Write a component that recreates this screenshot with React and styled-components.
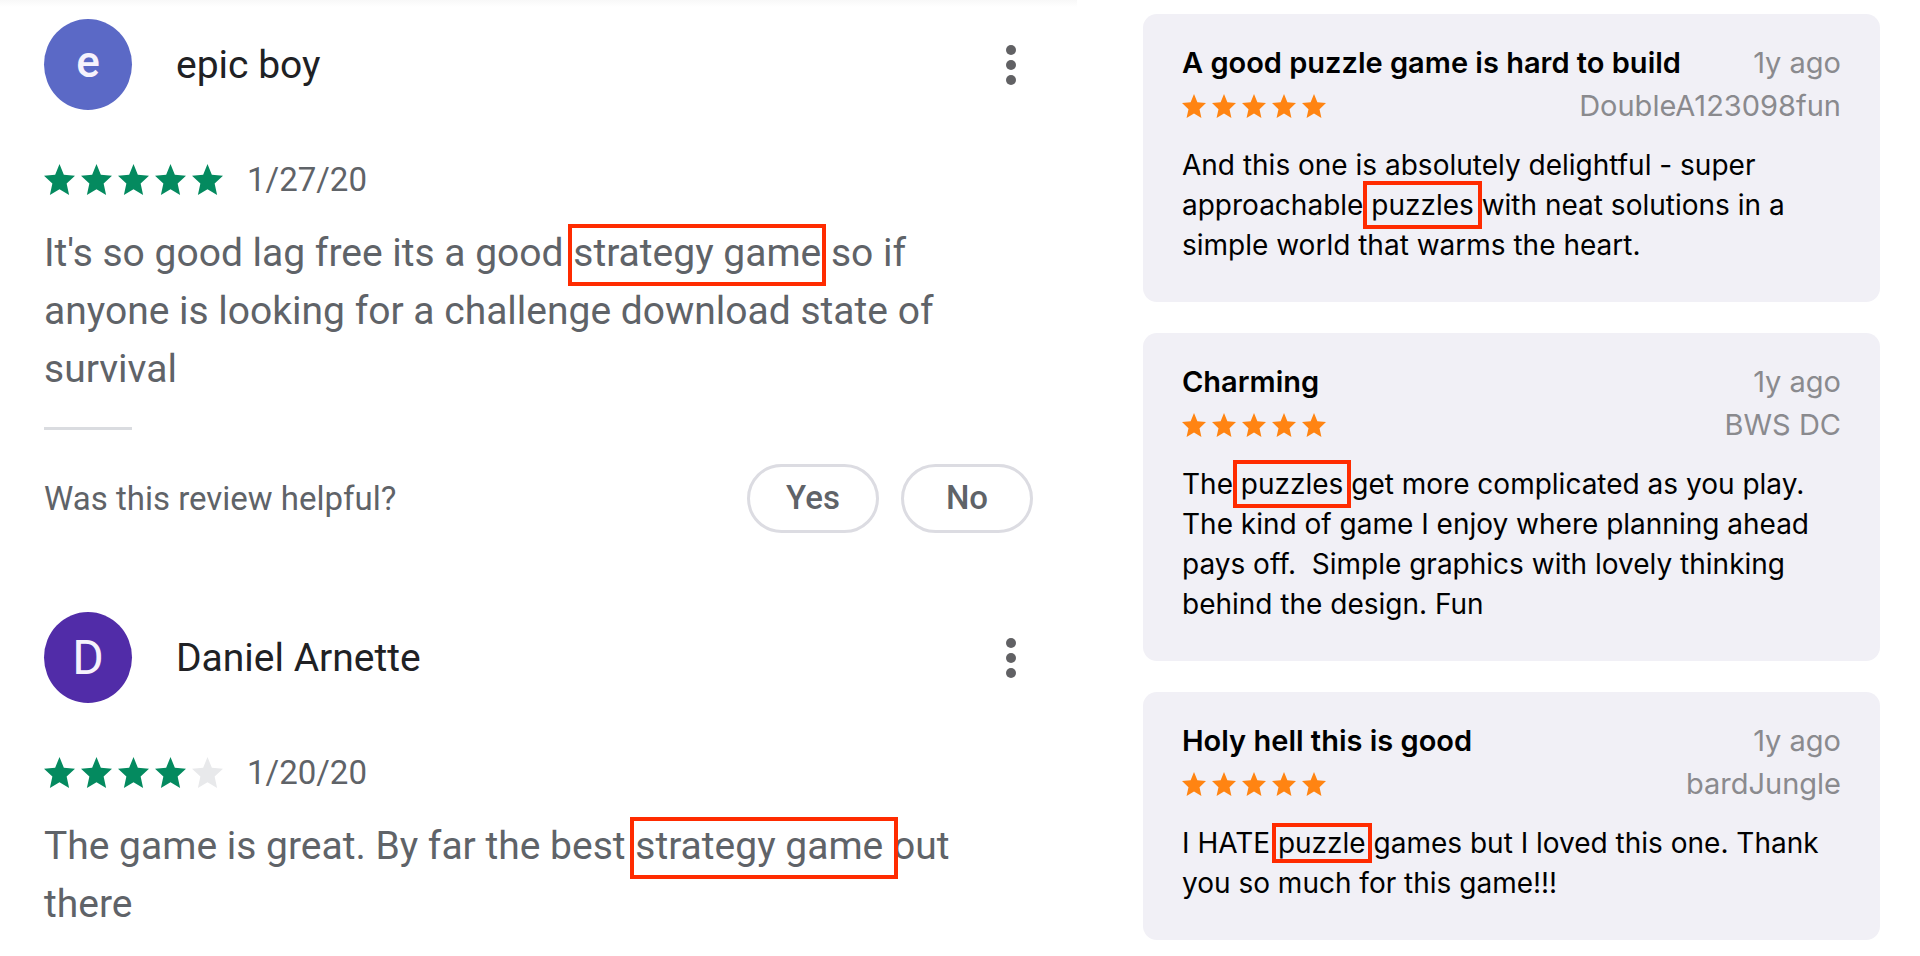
import React from 'react';
import styled, { createGlobalStyle } from 'styled-components';

const GlobalStyle = createGlobalStyle`
  * {
    box-sizing: border-box;
  }

  body {
    margin: 0;
    background: #fff;
  }

  h2, h3, p {
    margin: 0;
  }
`;

// Words in [brackets] are outlined in red.
const playReviews = [
  {
    name: 'epic boy',
    initial: 'e',
    color: '#5b69c6',
    bold: true,
    rating: 5,
    date: '1/27/20',
    lines: [
      "It's so good lag free its a good [strategy game] so if",
      'anyone is looking for a challenge download state of',
      'survival',
    ],
    askHelpful: true,
  },
  {
    name: 'Daniel Arnette',
    initial: 'D',
    color: '#512ca8',
    rating: 4,
    date: '1/20/20',
    lines: [
      'The game is great. By far the best [strategy game ]out',
      'there',
    ],
  },
];

const storeReviews = [
  {
    title: 'A good puzzle game is hard to build',
    author: 'DoubleA123098fun',
    lines: [
      'And this one is absolutely delightful - super',
      'approachable [puzzles] with neat solutions in a',
      'simple world that warms the heart.',
    ],
  },
  {
    title: 'Charming',
    author: 'BWS DC',
    lines: [
      'The [puzzles] get more complicated as you play.',
      'The kind of game I enjoy where planning ahead',
      'pays off.  Simple graphics with lovely thinking',
      'behind the design. Fun',
    ],
  },
  {
    title: 'Holy hell this is good',
    author: 'bardJungle',
    tightMark: true,
    lines: [
      'I HATE [puzzle] games but I loved this one. Thank',
      'you so much for this game!!!',
    ],
  },
];

const STAR = '50,0 64,33 100,36 73,60 81,95 50,77 19,95 27,60 0,36 36,33';

const Stars = ({ rating = 5, size, color }) => (
  <StarRow role="img" aria-label={`${rating} out of 5 stars`}>
    {[1, 2, 3, 4, 5].map((n) => (
      <svg key={n} width={size} height={size} viewBox="0 0 100 95" preserveAspectRatio="none">
        <polygon points={STAR} fill={n <= rating ? color : '#e8e9eb'} />
      </svg>
    ))}
  </StarRow>
);

const Lines = ({ lines, mark: MarkTag, tight }) =>
  lines.map((line) => (
    <Line key={line}>
      {line.split(/(\[.*?\])/).filter(Boolean).map((part) =>
        part.startsWith('[') ? (
          <MarkTag key={part} $tight={tight}>{part.slice(1, -1)}</MarkTag>
        ) : (
          part
        )
      )}
    </Line>
  ));

const PlayReview = ({ review }) => (
  <PlayItem>
    <PlayHeader>
      <Avatar $color={review.color} $bold={review.bold}>{review.initial}</Avatar>
      <PlayName>{review.name}</PlayName>
      <MenuButton aria-label="More options">
        <svg width="12" height="42" viewBox="0 0 12 42" fill="#616164">
          <circle cx="6" cy="6" r="5" />
          <circle cx="6" cy="21" r="5" />
          <circle cx="6" cy="36" r="5" />
        </svg>
      </MenuButton>
    </PlayHeader>
    <PlayMeta>
      <Stars rating={review.rating} size={31} color="#048a5f" />
      <PlayDate>{review.date}</PlayDate>
    </PlayMeta>
    <PlayBody>
      <Lines lines={review.lines} mark={PlayMark} />
    </PlayBody>
    {review.askHelpful && (
      <>
        <Divider />
        <Helpful>
          <Question>Was this review helpful?</Question>
          <PillButton>Yes</PillButton>
          <PillButton>No</PillButton>
        </Helpful>
      </>
    )}
  </PlayItem>
);

const StoreReview = ({ review }) => (
  <Card>
    <CardRow>
      <CardTitle>{review.title}</CardTitle>
      <CardMeta>1y ago</CardMeta>
    </CardRow>
    <CardRow>
      <Stars size={24} color="#ff8412" />
      <CardMeta>{review.author}</CardMeta>
    </CardRow>
    <CardBody>
      <Lines lines={review.lines} mark={StoreMark} tight={review.tightMark} />
    </CardBody>
  </Card>
);

const App = () => (
  <>
    <GlobalStyle />
    <Page>
      <PlayColumn>
        {playReviews.map((review) => (
          <PlayReview key={review.name} review={review} />
        ))}
      </PlayColumn>
      <StoreColumn>
        {storeReviews.map((review) => (
          <StoreReview key={review.title} review={review} />
        ))}
      </StoreColumn>
    </Page>
  </>
);

const Page = styled.main`
  display: grid;
  grid-template-columns: 1077fr 843fr;
  align-items: start;
`;

const PlayColumn = styled.section`
  display: flex;
  flex-direction: column;
  gap: 79px;
  min-width: 0;
  padding: 19px 44px 0;
  background: linear-gradient(#f8f8f8, #fff 7px);
  color: #5f6368;
  font-family: Roboto, sans-serif;
`;

const PlayItem = styled.article`
  display: flex;
  flex-direction: column;
`;

const PlayHeader = styled.header`
  display: flex;
  align-items: center;
`;

const Avatar = styled.span`
  display: flex;
  align-items: center;
  justify-content: center;
  width: 88px;
  height: 91px;
  margin-right: 44px;
  padding-bottom: ${({ $bold }) => ($bold ? '6px' : '0')};
  border-radius: 50%;
  background: ${({ $color }) => $color};
  color: #f6f2fc;
  font-size: ${({ $bold }) => ($bold ? '44px' : '48px')};
  font-weight: ${({ $bold }) => ($bold ? 500 : 400)};
`;

const PlayName = styled.h2`
  flex: 1;
  color: #202124;
  font-size: 39px;
  font-weight: 400;
`;

const MenuButton = styled.button`
  display: flex;
  margin-right: 16px;
  padding: 0;
  border: 0;
  background: none;
`;

const PlayMeta = styled.div`
  display: flex;
  align-items: center;
  gap: 24px;
  height: 40px;
  margin-top: 49px;
`;

const StarRow = styled.span`
  display: flex;
  gap: 6px;
`;

const PlayDate = styled.span`
  font-size: 33px;
`;

const PlayBody = styled.p`
  margin-top: 25px;
  font-size: 39px;
  line-height: 58px;
`;

const Line = styled.span`
  display: block;
  white-space: pre-wrap;
`;

const Mark = styled.mark`
  position: relative;
  background: none;
  color: inherit;

  &::after {
    content: '';
    position: absolute;
    border: 4px solid #ff2b00;
  }
`;

const PlayMark = styled(Mark)`
  &::after {
    inset: -6px -5px -10px;
  }
`;

const StoreMark = styled(Mark)`
  &::after {
    inset: ${({ $tight }) => ($tight ? '-3px -6px' : '-7px -8px')};
  }
`;

const Divider = styled.hr`
  width: 88px;
  height: 3px;
  margin: 29px 0 0;
  border: 0;
  background: #dadce0;
`;

const Helpful = styled.div`
  display: flex;
  align-items: center;
  gap: 22px;
  margin-top: 34px;
`;

const Question = styled.span`
  flex: 1;
  font-size: 33px;
`;

const PillButton = styled.button`
  width: 132px;
  height: 69px;
  padding: 0 0 2px;
  border: 3px solid #dcdce2;
  border-radius: 35px;
  background: #fff;
  color: #5f6368;
  font: 500 33px Roboto, sans-serif;
`;

const StoreColumn = styled.section`
  display: flex;
  flex-direction: column;
  gap: 31px;
  padding: 14px 40px 14px 66px;
  color: #000;
  font-family: Inter, sans-serif;
`;

const Card = styled.article`
  padding: 27px 39px 37px;
  border-radius: 14px;
  background: #f1f0f6;
`;

const CardRow = styled.div`
  display: flex;
  align-items: center;
  justify-content: space-between;
  height: 43px;
`;

const CardTitle = styled.h3`
  font-size: 29px;
  font-weight: 600;
`;

const CardMeta = styled.span`
  color: #8a8a8e;
  font-size: 29px;
`;

const CardBody = styled.p`
  margin-top: 18px;
  font-size: 28px;
  line-height: 40px;
`;

export default App;
